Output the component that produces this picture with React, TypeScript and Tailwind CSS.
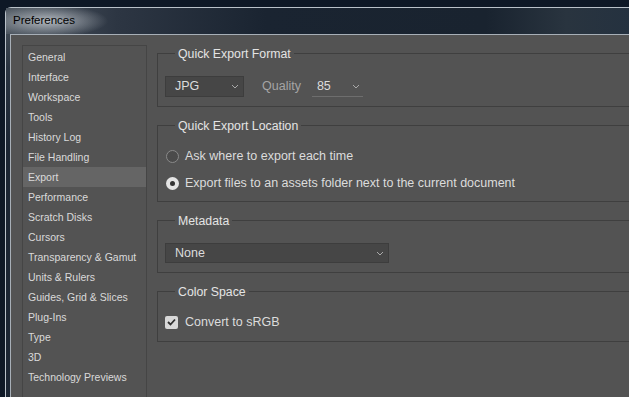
const sidebarItems = [
  'General',
  'Interface',
  'Workspace',
  'Tools',
  'History Log',
  'File Handling',
  'Export',
  'Performance',
  'Scratch Disks',
  'Cursors',
  'Transparency & Gamut',
  'Units & Rulers',
  'Guides, Grid & Slices',
  'Plug-Ins',
  'Type',
  '3D',
  'Technology Previews',
];

function Chevron() {
  return (
    <svg width="8" height="5" viewBox="0 0 8 5" className="shrink-0">
      <path d="M1 1l3 3 3-3" fill="none" stroke="#a9a9a9" strokeWidth="1" />
    </svg>
  );
}

function Group({ title, children }: { title: string; children: React.ReactNode }) {
  return (
    <fieldset className="border border-[#3f3f3f] pl-[7px]">
      <legend className="ml-[10px] px-[3px] pt-[2px] text-[12.3px] leading-[14px] text-[#e4e4e4]">{title}</legend>
      {children}
    </fieldset>
  );
}

function Radio({ checked, label }: { checked?: boolean; label: string }) {
  return (
    <div className="flex h-[20px] items-center gap-[6px] pl-[1px]">
      {checked ? (
        <span className="flex h-[13px] w-[13px] items-center justify-center rounded-full bg-[#e4e4e4]">
          <span className="h-[5px] w-[5px] rounded-full bg-[#333]" />
        </span>
      ) : (
        <span className="h-[13px] w-[13px] rounded-full border border-[#8a8a8a] bg-[#4b4b4b]" />
      )}
      <span>{label}</span>
    </div>
  );
}

export default function App() {
  return (
    <div
      className="h-[397px] w-[629px] overflow-hidden bg-[#0e1826] pl-[5px] pt-[7px]"
      style={{ fontFamily: '"Liberation Sans", Arial, sans-serif' }}
    >
      <div className="w-[660px] rounded-tl-[6px] border-l border-t border-[#b9c1c9] bg-[linear-gradient(180deg,#4d565f_0px,#2a3441_60px,#1b2533_140px)]">
        {/* Title bar */}
        <div className="flex h-[26px] items-center bg-[radial-gradient(ellipse_60px_16px_at_42px_13px,rgba(215,220,225,0.75),transparent),linear-gradient(90deg,#4f5862_0px,#2d3643_110px,#1a2431_260px,#19232f_480px,#29343f_560px,#223040_660px)] pl-[7px]">
          <span className="text-[11.5px] text-black">Preferences</span>
        </div>

        {/* Body */}
        <div className="ml-[4px] flex h-[380px] gap-[10px] border-l border-t border-[#a7afb7] bg-[#535353] pl-[11px] pt-[10px] text-[12.5px] text-[#dcdcdc]">
          {/* Sidebar */}
          <div className="w-[125px] shrink-0 border border-[#454545] pt-[1px] text-[10.5px] text-[#dadada]">
            {sidebarItems.map((item) => (
              <div
                key={item}
                className={`h-[20px] pl-[5px] leading-[20px] ${item === 'Export' ? 'bg-[#656565]' : ''}`}
              >
                {item}
              </div>
            ))}
          </div>

          {/* Settings */}
          <div className="flex flex-1 flex-col gap-[10px]">
            <Group title="Quick Export Format">
              <div className="mt-[15px] mb-[9px] flex items-center">
                <div className="flex h-[21px] w-[79px] items-center justify-between border border-[#3d3d3d] bg-[#464646] pl-[9px] pr-[4px]">
                  <span>JPG</span>
                  <Chevron />
                </div>
                <span className="ml-[18px] text-[#a5a5a5]">Quality</span>
                <div className="ml-[11px] flex h-[21px] w-[51px] items-center justify-between border-b border-[#6e6e6e] pl-[5px] pr-[3px]">
                  <span>85</span>
                  <Chevron />
                </div>
              </div>
            </Group>

            <Group title="Quick Export Location">
              <div className="mt-[13px] mb-[8px] flex flex-col gap-[7px]">
                <Radio label="Ask where to export each time" />
                <Radio checked label="Export files to an assets folder next to the current document" />
              </div>
            </Group>

            <Group title="Metadata">
              <div className="mt-[15px] mb-[9px] flex h-[20px] w-[224px] items-center justify-between border border-[#3d3d3d] bg-[#464646] pl-[9px] pr-[4px]">
                <span>None</span>
                <Chevron />
              </div>
            </Group>

            <Group title="Color Space">
              <div className="mt-[13px] mb-[9px] flex h-[20px] items-center gap-[7px]">
                <span className="flex h-[13px] w-[13px] items-center justify-center rounded-[2px] bg-[#d8d8d8]">
                  <svg width="9" height="8" viewBox="0 0 9 8">
                    <path d="M1 4l2.5 2.5L8 1.5" fill="none" stroke="#2e2e2e" strokeWidth="1.8" />
                  </svg>
                </span>
                <span>Convert to sRGB</span>
              </div>
            </Group>
          </div>
        </div>
      </div>
    </div>
  );
}
